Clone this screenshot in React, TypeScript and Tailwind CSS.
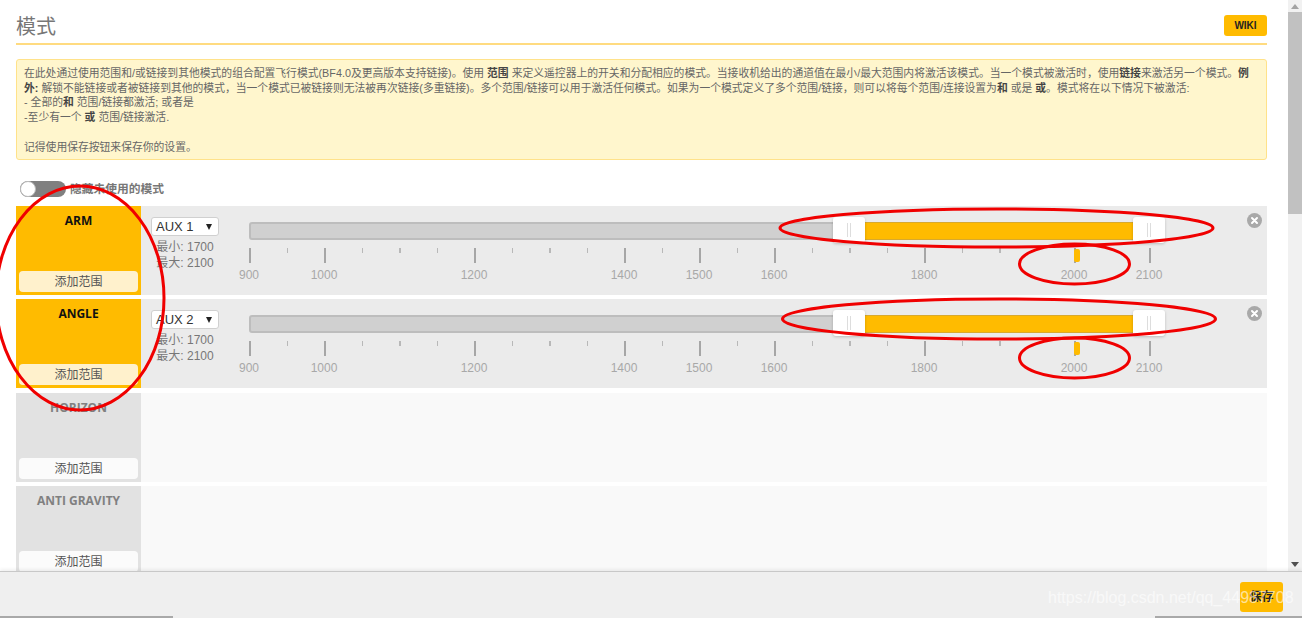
import React from 'react';

const cjk = { fontFamily: '"Liberation Sans", "Noto Sans CJK SC", sans-serif' };

const majors = [900, 1000, 1200, 1400, 1500, 1600, 1800, 2000, 2100];
const minors = [950, 1050, 1100, 1150, 1250, 1300, 1350, 1450, 1550, 1650, 1700, 1750, 1850, 1900];

const pos = (value: number) => (value - 900) * 0.75;

const CloseIcon = () => (
  <svg width="15" height="15" viewBox="0 0 15 15">
    <circle cx="7.5" cy="7.5" r="7.5" fill="#a9a9a9" />
    <path d="M5 5l5 5M10 5l-5 5" stroke="#fff" strokeWidth="2" strokeLinecap="round" />
  </svg>
);

const Handle = ({ left }: { left: number }) => (
  <div
    className="absolute top-[-7px] flex h-[26px] w-[32px] items-center justify-center gap-[2px] rounded-[3px] bg-white shadow-[0_1px_3px_rgba(0,0,0,0.2)]"
    style={{ left }}
  >
    <div className="h-[14px] w-px bg-[#ddd]" />
    <div className="h-[14px] w-px bg-[#ddd]" />
  </div>
);

const ChannelSlider = () => (
  <div className="relative ml-[30px] mt-[5px] w-[900px]">
    {/* track with selected range */}
    <div className="relative h-[18px] rounded-[3px] border-2 border-[#bdbdbd] bg-[#d0d0d0]">
      <div className="absolute bottom-[-2px] left-[614px] top-[-2px] w-[269px] border-y border-[#d8a92e] bg-[#ffbb00]" />
      <Handle left={582} />
      <Handle left={882} />
    </div>
    {/* scale */}
    <div className="relative mt-[8px] h-[36px]">
      {minors.map((v) => (
        <div key={v} className="absolute top-0 h-[5px] w-[1.5px] bg-[#b8b8b8]" style={{ left: pos(v) }} />
      ))}
      {majors.map((v) => (
        <React.Fragment key={v}>
          <div className="absolute top-0 h-[15px] w-[1.5px] bg-[#a6a6a6]" style={{ left: pos(v) }} />
          <div
            className="absolute top-[20px] w-[40px] -translate-x-1/2 text-center text-[12px] leading-[14px] text-[#a8a8a8]"
            style={{ left: pos(v) }}
          >
            {v}
          </div>
        </React.Fragment>
      ))}
      <div className="absolute left-[825px] top-[1px] h-[13px] w-[6px] rounded-[2px] bg-[#ffbb00]" />
    </div>
  </div>
);

const ModeRow = ({ name, aux }: { name: string; aux?: string }) => {
  const active = Boolean(aux);
  return (
    <div className="flex h-[89px] shrink-0">
      <div className={`flex w-[125px] shrink-0 flex-col items-center justify-between px-[3px] pb-[3px] pt-[8px] ${active ? 'bg-[#ffbb00]' : 'bg-[#e2e2e2]'}`}>
        <div
          className={`text-[12px] font-bold leading-[14px] ${active ? 'text-[#111]' : 'text-[#808080]'}`}
          style={{ fontFamily: '"Open Sans", sans-serif' }}
        >
          {name}
        </div>
        <button className={`h-[21px] w-full rounded-[4px] pt-[1px] text-[12px] leading-[20px] text-[#555] ${active ? 'bg-[#fff1cc]' : 'bg-[#fbfbfb]'}`}>
          添加范围
        </button>
      </div>
      <div className={`flex flex-1 pl-[10px] pt-[11px] ${active ? 'bg-[#ebebeb]' : 'bg-[#f9f9f9]'}`}>
        {active && (
          <>
            <div className="w-[68px] shrink-0">
              <div className="flex h-[19px] items-center justify-between rounded-[3px] border border-[#d0d0d0] bg-white pl-[4px] pr-[6px] text-[13px] leading-[17px] text-[#333]">
                <span>{aux}</span>
                <span className="h-0 w-0 border-x-[3px] border-t-[6px] border-x-transparent border-t-[#222]" />
              </div>
              <div className="mt-[4px] text-center text-[12px] leading-[15.6px] text-[#777]">
                <div>最小: 1700</div>
                <div>最大: 2100</div>
              </div>
            </div>
            <ChannelSlider />
            <div className="ml-auto mr-[5px] mt-[-4px]">
              <CloseIcon />
            </div>
          </>
        )}
      </div>
    </div>
  );
};

export default function App() {
  return (
    <div className="relative flex h-[618px] w-[1302px] flex-col overflow-hidden bg-white" style={cjk}>
      <div className="flex min-h-0 flex-1">
        <div className="min-w-0 flex-1 overflow-hidden pl-4 pr-[21px]">
          <div className="flex h-[45px] items-start justify-between border-b-2 border-[#ffdb80] pt-[15px]">
            <h1 className="text-[20px] leading-[24px] text-[#777]">模式</h1>
            <button className="h-[21px] w-[43px] rounded-[3px] bg-[#ffbb00] text-[10px] font-bold leading-[21px] text-[#222]">WIKI</button>
          </div>

          <div className="mt-[14px] h-[101px] rounded-[3px] border border-[#ffe28a] bg-[#fff6cd] pl-[7px] pr-[8px] pt-[6px] text-[10.8px] leading-[14.7px] text-[#666]">
            <p>
              在此处通过使用范围和/或链接到其他模式的组合配置飞行模式(BF4.0及更高版本支持链接)。使用 <b className="text-[#444]">范围</b> 来定义遥控器上的开关和分配相应的模式。当接收机给出的通道值在最小/最大范围内将激活该模式。当一个模式被激活时，使用<b className="text-[#444]">链接</b>来激活另一个模式。<b className="text-[#444]">例外:</b> 解锁不能链接或者被链接到其他的模式，当一个模式已被链接则无法被再次链接(多重链接)。多个范围/链接可以用于激活任何模式。如果为一个模式定义了多个范围/链接，则可以将每个范围/连接设置为<b className="text-[#444]">和</b> 或是 <b className="text-[#444]">或</b>。模式将在以下情况下被激活:
            </p>
            <p>- 全部的<b className="text-[#444]">和</b> 范围/链接都激活; 或者是</p>
            <p>-至少有一个 <b className="text-[#444]">或</b> 范围/链接激活.</p>
            <p className="mt-[14.7px]">记得使用保存按钮来保存你的设置。</p>
          </div>

          <div className="mb-[9px] ml-[4px] mt-[21px] flex h-[16px] items-center gap-[4px]">
            <div className="h-[16px] w-[46px] rounded-full bg-[#808080]">
              <div className="h-[16px] w-[16px] rounded-full border border-[#bbb] bg-white" />
            </div>
            <span className="text-[11.75px] font-bold text-[#777]">隐藏未使用的模式</span>
          </div>

          <div className="flex flex-col gap-[4.33px]">
            <ModeRow name="ARM" aux="AUX 1" />
            <ModeRow name="ANGLE" aux="AUX 2" />
            <ModeRow name="HORIZON" />
            <ModeRow name="ANTI GRAVITY" />
          </div>
        </div>

        {/* scrollbar */}
        <div className="flex w-[14px] shrink-0 flex-col items-center justify-between bg-[#f1f1f1]">
          <div className="flex w-full flex-col items-center">
            <div className="flex h-[12px] items-center">
              <div className="h-0 w-0 border-x-[4px] border-b-[5px] border-x-transparent border-b-[#a3a3a3]" />
            </div>
            <div className="h-[202px] w-full bg-[#c1c1c1]" />
          </div>
          <div className="flex h-[14px] items-center">
            <div className="h-0 w-0 border-x-[4px] border-t-[5px] border-x-transparent border-t-[#505050]" />
          </div>
        </div>
      </div>

      <div className="flex h-[47px] shrink-0 flex-col border-t border-[#c8c8c8] bg-[#efefef] shadow-[0_-2px_3px_rgba(0,0,0,0.06)]">
        <div className="flex flex-1 justify-end pr-[19px] pt-[10px]">
          <button className="h-[30px] w-[43px] rounded-[3px] bg-[#ffbb00] text-[12px] font-bold leading-[30px] text-[#222]">保存</button>
        </div>
        <div className="flex h-[2px] justify-between">
          <div className="w-[173px] bg-[#a9a9a9]" />
          <div className="w-[147px] bg-[#a9a9a9]" />
        </div>
      </div>

      {/* red annotations drawn over the screenshot */}
      <svg className="pointer-events-none absolute inset-0" width="1302" height="618" fill="none" stroke="#f00000" strokeWidth="3">
        <ellipse cx="80" cy="298" rx="84" ry="112" />
        <ellipse cx="996.5" cy="228" rx="216.5" ry="19" />
        <ellipse cx="999" cy="319" rx="216.5" ry="20" />
        <ellipse cx="1074.5" cy="264" rx="55" ry="20" />
        <ellipse cx="1074.5" cy="358" rx="55" ry="20" />
      </svg>

      {/* watermark */}
      <div className="pointer-events-none absolute left-[1048px] top-[587px] text-[16px] leading-[22px] text-white/60">
        https://blog.csdn.net/qq_44987708
      </div>
    </div>
  );
}
